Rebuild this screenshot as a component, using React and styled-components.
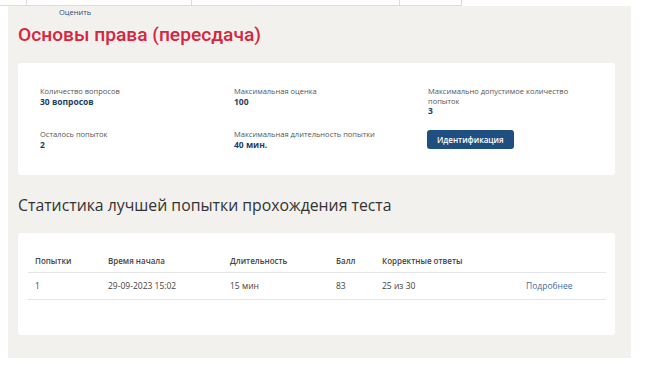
import React from "react";
import styled, { createGlobalStyle } from "styled-components";

const GlobalStyle = createGlobalStyle`
  html, body {
    margin: 0;
    padding: 0;
    background: #ffffff;
  }
  body {
    font-family: "Open Sans", "Liberation Sans", sans-serif;
    color: #333;
  }
`;

const stats = [
  { label: "Количество вопросов", value: "30 вопросов" },
  { label: "Максимальная оценка", value: "100" },
  { label: "Максимально допустимое количество попыток", value: "3" },
  { label: "Осталось попыток", value: "2" },
  { label: "Максимальная длительность попытки", value: "40 мин." },
];

const columns = [
  { title: "Попытки", width: 73 },
  { title: "Время начала", width: 122 },
  { title: "Длительность", width: 106 },
  { title: "Балл", width: 46 },
  { title: "Корректные ответы", width: 144 },
  { title: "", width: 87 },
];

const attempts = [
  { n: "1", start: "29-09-2023 15:02", duration: "15 мин", score: "83", correct: "25 из 30" },
];

const App = () => {
  return (
    <>
      <GlobalStyle />
      <TopStrip>
        <TopCell width={27} />
        <TopCell width={165} />
        <TopCell width={208} />
        <TopCell width={62} />
      </TopStrip>
      <Panel>
        <RateLink href="#">Оценить</RateLink>
        <Title>Основы права (пересдача)</Title>
        <Card gap={16}>
          <StatsGrid>
            {stats.map((s) => (
              <Stat key={s.label}>
                <StatLabel>{s.label}</StatLabel>
                <StatValue>{s.value}</StatValue>
              </Stat>
            ))}
            <Stat>
              <Button type="button">Идентификация</Button>
            </Stat>
          </StatsGrid>
        </Card>
        <Heading>Статистика лучшей попытки прохождения теста</Heading>
        <Card gap={17}>
          <TableWrap>
            <Table>
              <colgroup>
                {columns.map((c, i) => (
                  <col key={i} style={{ width: c.width }} />
                ))}
              </colgroup>
              <thead>
                <tr>
                  {columns.map((c, i) => (
                    <Th key={i}>{c.title}</Th>
                  ))}
                </tr>
              </thead>
              <tbody>
                {attempts.map((a) => (
                  <tr key={a.n}>
                    <Td>{a.n}</Td>
                    <Td>{a.start}</Td>
                    <Td>{a.duration}</Td>
                    <Td>{a.score}</Td>
                    <Td>{a.correct}</Td>
                    <Td>
                      <MoreLink href="#">Подробнее</MoreLink>
                    </Td>
                  </tr>
                ))}
              </tbody>
            </Table>
          </TableWrap>
        </Card>
      </Panel>
    </>
  );
};

const TopStrip = styled.div`
  display: flex;
  height: 6px;
  width: 462px;
`;

const TopCell = styled.div`
  width: ${(p) => p.width}px;
  box-sizing: border-box;
  border-right: 1px solid #dcdcdc;
  border-bottom: 1px solid #dcdcdc;
`;

const Panel = styled.section`
  margin-left: 8px;
  width: 623px;
  height: 352px;
  box-sizing: border-box;
  padding: 0 16px 0 10px;
  background: #f2f1ee;
  overflow: hidden;
`;

const RateLink = styled.a`
  display: block;
  margin: 1px 0 0 41px;
  font-size: 7.5px;
  line-height: 10px;
  color: #2c4a72;
  text-decoration: none;
`;

const Title = styled.h1`
  margin: 6px 0 0;
  font-family: "Roboto", "Liberation Sans", sans-serif;
  font-weight: 500;
  font-size: 19.2px;
  line-height: 24px;
  color: #d6253c;
`;

const Card = styled.div`
  margin-top: ${(p) => p.gap}px;
  background: #ffffff;
  border-radius: 3px;
`;

const StatsGrid = styled.div`
  display: grid;
  grid-template-columns: 194px 194px 145px;
  row-gap: 14px;
  padding: 24px 22px 25px 22px;
`;

const Stat = styled.div`
  display: flex;
  flex-direction: column;
  align-items: flex-start;
`;

const StatLabel = styled.div`
  font-size: 7.5px;
  line-height: 9.5px;
  color: #555;
`;

const StatValue = styled.div`
  font-size: 8.5px;
  line-height: 10px;
  font-weight: 700;
  color: #1d3d66;
`;

const Button = styled.button`
  margin-left: -1px;
  border: none;
  border-radius: 3px;
  background: #1f4f80;
  color: #ffffff;
  font-family: "Open Sans", "Liberation Sans", sans-serif;
  font-weight: 600;
  font-size: 8px;
  height: 19px;
  padding: 0 10px;
  cursor: pointer;
`;

const Heading = styled.h2`
  margin: 19px 0 0;
  font-weight: 400;
  font-size: 15.8px;
  line-height: 22px;
  color: #333;
`;

const TableWrap = styled.div`
  padding: 17px 9px 35px 10px;
`;

const Table = styled.table`
  width: 100%;
  border-collapse: collapse;
  table-layout: fixed;
`;

const Th = styled.th`
  text-align: left;
  font-size: 8px;
  line-height: 10px;
  font-weight: 600;
  color: #444;
  padding: 6px 7px;
  border-bottom: 1px solid #e5e5e5;
`;

const Td = styled.td`
  font-size: 8.5px;
  line-height: 10px;
  color: #444;
  padding: 8px 7px;
  border-bottom: 1px solid #e5e5e5;
`;

const MoreLink = styled.a`
  color: #3b6ea5;
  text-decoration: none;
`;

export default App;
